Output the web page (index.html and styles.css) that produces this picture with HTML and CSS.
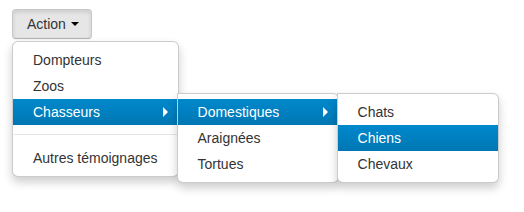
FILE: index.html
```html
<!DOCTYPE html>
<html lang="fr">
<head>
    <meta charset="UTF-8">
    <title>Dropdown</title>
    <link rel="stylesheet" href="styles.css">
</head>
<body>
    <div class="btn-group open">
        <button class="btn dropdown-toggle">Action <span class="caret"></span></button>
        <ul class="dropdown-menu">
            <li><a href="#">Dompteurs</a></li>
            <li><a href="#">Zoos</a></li>
            <li class="dropdown-submenu active">
                <a href="#">Chasseurs</a>
                <ul class="dropdown-menu">
                    <li class="dropdown-submenu active">
                        <a href="#">Domestiques</a>
                        <ul class="dropdown-menu">
                            <li><a href="#">Chats</a></li>
                            <li class="active"><a href="#">Chiens</a></li>
                            <li><a href="#">Chevaux</a></li>
                        </ul>
                    </li>
                    <li><a href="#">Araignées</a></li>
                    <li><a href="#">Tortues</a></li>
                </ul>
            </li>
            <li class="divider"></li>
            <li><a href="#">Autres témoignages</a></li>
        </ul>
    </div>
</body>
</html>
```

FILE: styles.css
```css
/* Page */
html {
    height: 100%;
}

body {
    box-sizing: border-box;
    min-height: 100%;
    margin: 0;
    padding: 9px 12px;
    font-family: "Liberation Sans", Arial, sans-serif;
    font-size: 14px;
    line-height: 20px;
    color: #333333;
    background: #ffffff;
}

/* Button */
.btn-group {
    position: relative;
    display: inline-block;
}

.btn {
    display: inline-block;
    padding: 4px 12px 4px 14px;
    font-family: inherit;
    font-size: 14px;
    line-height: 20px;
    color: #333333;
    background: #e6e6e6;
    border: 1px solid #c8c8c8;
    border-bottom-color: #b3b3b3;
    border-radius: 4px;
    box-shadow: inset 0 2px 4px rgba(0, 0, 0, 0.12), 0 1px 2px rgba(0, 0, 0, 0.05);
    cursor: pointer;
}

.caret {
    display: inline-block;
    width: 0;
    height: 0;
    vertical-align: top;
    margin-top: 8px;
    margin-left: 1px;
    border-top: 4px solid #000000;
    border-left: 4px solid transparent;
    border-right: 4px solid transparent;
}

/* Menus */
.dropdown-menu {
    position: absolute;
    top: 100%;
    left: 0;
    z-index: 1000;
    min-width: 160px;
    margin: 2px 0 0;
    padding: 5px 0;
    list-style: none;
    background: #ffffff;
    border: 1px solid rgba(0, 0, 0, 0.2);
    border-radius: 6px;
    box-shadow: 0 5px 10px rgba(0, 0, 0, 0.2);
}

.dropdown-menu > li > a {
    display: block;
    padding: 3px 20px;
    line-height: 20px;
    color: #333333;
    text-decoration: none;
    white-space: nowrap;
}

.dropdown-menu > .active > a {
    color: #ffffff;
    background: linear-gradient(to bottom, #0088cc, #0077b3);
}

.dropdown-menu .divider {
    height: 1px;
    margin: 9px 1px;
    background: #e5e5e5;
    border-bottom: 1px solid #ffffff;
}

/* Submenus */
.dropdown-submenu {
    position: relative;
}

.dropdown-submenu > .dropdown-menu {
    top: 0;
    left: 100%;
    margin-top: -6px;
    margin-left: -1px;
    border-radius: 0 6px 6px 6px;
}

.dropdown-submenu > a:after {
    content: " ";
    display: block;
    float: right;
    width: 0;
    height: 0;
    margin-top: 5px;
    margin-right: -10px;
    border-style: solid;
    border-color: transparent;
    border-width: 5px 0 5px 5px;
    border-left-color: #cccccc;
}

.dropdown-submenu.active > a:after {
    border-left-color: #ffffff;
}
```
